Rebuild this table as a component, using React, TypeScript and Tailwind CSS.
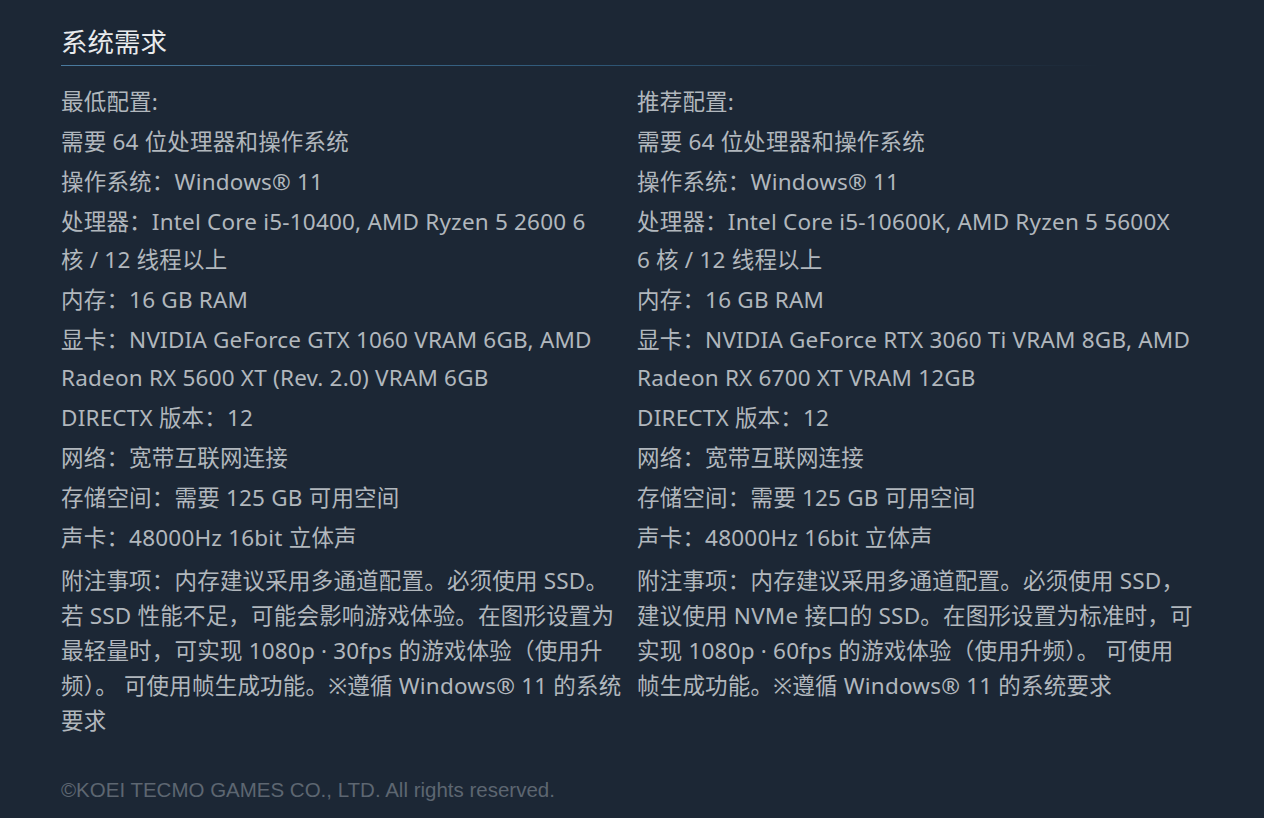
const FONT = "font-['Noto_Sans','Noto_Sans_CJK_SC',sans-serif]";

// lines are kept as they wrap in the Steam page
type Spec = { label?: string; lines: string[]; note?: boolean };

const minimum: Spec[] = [
  { lines: ['需要 64 位处理器和操作系统'] },
  { label: '操作系统：', lines: ['Windows® 11'] },
  { label: '处理器：', lines: ['Intel Core i5-10400, AMD Ryzen 5 2600 6', '核 / 12 线程以上'] },
  { label: '内存：', lines: ['16 GB RAM'] },
  { label: '显卡：', lines: ['NVIDIA GeForce GTX 1060 VRAM 6GB, AMD', 'Radeon RX 5600 XT (Rev. 2.0) VRAM 6GB'] },
  { label: 'DIRECTX 版本：', lines: ['12'] },
  { label: '网络：', lines: ['宽带互联网连接'] },
  { label: '存储空间：', lines: ['需要 125 GB 可用空间'] },
  { label: '声卡：', lines: ['48000Hz 16bit 立体声'] },
  {
    label: '附注事项：',
    note: true,
    lines: [
      '内存建议采用多通道配置。必须使用 SSD。',
      '若 SSD 性能不足，可能会影响游戏体验。在图形设置为',
      '最轻量时，可实现 1080p · 30fps 的游戏体验（使用升',
      '频）。 可使用帧生成功能。※遵循 Windows® 11 的系统',
      '要求',
    ],
  },
];

const recommended: Spec[] = [
  { lines: ['需要 64 位处理器和操作系统'] },
  { label: '操作系统：', lines: ['Windows® 11'] },
  { label: '处理器：', lines: ['Intel Core i5-10600K, AMD Ryzen 5 5600X', '6 核 / 12 线程以上'] },
  { label: '内存：', lines: ['16 GB RAM'] },
  { label: '显卡：', lines: ['NVIDIA GeForce RTX 3060 Ti VRAM 8GB, AMD', 'Radeon RX 6700 XT VRAM 12GB'] },
  { label: 'DIRECTX 版本：', lines: ['12'] },
  { label: '网络：', lines: ['宽带互联网连接'] },
  { label: '存储空间：', lines: ['需要 125 GB 可用空间'] },
  { label: '声卡：', lines: ['48000Hz 16bit 立体声'] },
  {
    label: '附注事项：',
    note: true,
    lines: [
      '内存建议采用多通道配置。必须使用 SSD，',
      '建议使用 NVMe 接口的 SSD。在图形设置为标准时，可',
      '实现 1080p · 60fps 的游戏体验（使用升频）。 可使用',
      '帧生成功能。※遵循 Windows® 11 的系统要求',
    ],
  },
];

function Column({ title, items }: { title: string; items: Spec[] }) {
  return (
    <div className="w-[560px]">
      <div className="leading-[38px] mb-[2px]">{title}</div>
      <ul>
        {items.map((it, i) => (
          <li key={i} className={`whitespace-nowrap ${it.note ? 'leading-[35px] pt-[4px]' : 'leading-[38px] mb-[2px]'}`}>
            {it.label && <span>{it.label}</span>}
            {it.lines.map((l, j) => (
              <span key={j}>
                {j > 0 && <br />}
                {l}
              </span>
            ))}
          </li>
        ))}
      </ul>
    </div>
  );
}

export default function App() {
  return (
    <div className={`min-h-screen w-[1264px] h-[818px] bg-[#1c2735] ${FONT} text-[#b1b7bd] text-[22.5px] tracking-[0.2px] pl-[61px] pt-[23px] overflow-hidden`}>
      <h2 className="text-[26.5px] leading-[38px] tracking-normal text-[#e8eaec]">系统需求</h2>
      <div className="h-px w-[1040px] mt-[4px] bg-gradient-to-r from-[#4a7a9e] via-[#2f5878] to-transparent" />
      <div className="flex gap-[16px] mt-[17px]">
        <Column title="最低配置:" items={minimum} />
        <Column title="推荐配置:" items={recommended} />
      </div>
      <p className="mt-[37px] font-['Liberation_Sans',Arial,sans-serif] tracking-normal text-[20.5px] text-[#5d6671]">
        ©KOEI TECMO GAMES CO., LTD. All rights reserved.
      </p>
    </div>
  );
}
